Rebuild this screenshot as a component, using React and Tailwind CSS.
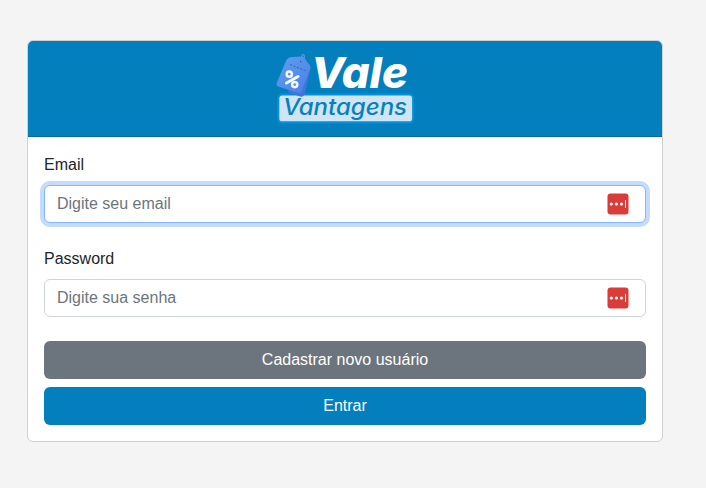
function Logo() {
  return (
    <svg width="144" height="80" viewBox="273 50 144 80" role="img" aria-label="Vale Vantagens" className="overflow-visible">
      <defs>
        <linearGradient id="tag" x1="0" y1="0" x2="1" y2="1">
          <stop offset="0" stopColor="#5f9ff0" />
          <stop offset="1" stopColor="#4a80e6" />
        </linearGradient>
      </defs>
      <rect x="278.200" y="94.400" width="135" height="28" rx="4" fill="#cfe5f3" stroke="#0092dc" strokeWidth="2.200" />
      <path d="M301 59l8.500 5q1.600 1.500 1.300 4l-5.800 25q-1 4.300-5 3.600l-12.500-4.600z" fill="#3f74da" />
      <path
        d="M289.800 57.200l11.500-.7q2 0 3 1.500l5.500 7.500q1 1.500.300 3.500l-8.300 21.500q-1.300 3-4.500 2l-18.500-5.800q-3-1-2-4l9.300-22q1-2.500 3.700-3.500z"
        fill="url(#tag)"
      />
      <path d="M290 64.500l15.500 6.200" stroke="#3260b5" strokeWidth="1" strokeDasharray="2.200 1.500" fill="none" />
      <circle cx="301.500" cy="61" r="1.500" fill="#3364bd" />
      <path d="M301.500 61c-.6-4 .9-7.300 2.200-6.300s.2 4.300-1.200 6.500" fill="none" stroke="#5a92ea" strokeWidth="1.300" strokeLinecap="round" />
      <g fill="none" stroke="#f4f7ff" strokeLinecap="round">
        <path d="M298 76.500l-11.500 6.500" strokeWidth="3" />
        <circle cx="289.300" cy="74.200" r="2.600" strokeWidth="2.500" />
        <circle cx="294.700" cy="84.600" r="2.600" strokeWidth="2.500" />
      </g>
      <text x="311" y="88" textLength="97" lengthAdjust="spacingAndGlyphs" fill="#fff" className="font-['Inter',sans-serif] text-[43px] font-extrabold italic [font-feature-settings:'cv11']">
        Vale
      </text>
      <text x="283" y="114.700" textLength="124" lengthAdjust="spacingAndGlyphs" fill="#0780c0" className="font-['Inter',sans-serif] text-[22.5px] font-medium italic [font-feature-settings:'cv11']">
        Vantagens
      </text>
    </svg>
  );
}

function PasswordManagerIcon() {
  return (
    <svg width="22" height="22" viewBox="0 0 22 22" className="shrink-0" aria-hidden="true">
      <rect x=".5" y=".5" width="21" height="21" rx="3" fill="#d93c39" />
      <circle cx="4.300" cy="11" r="1.600" fill="#fff" />
      <circle cx="9.400" cy="11" r="1.600" fill="#fff" />
      <circle cx="14.500" cy="11" r="1.600" fill="#fff" />
      <rect x="18" y="7" width="1" height="8" fill="#fff" />
    </svg>
  );
}

function Field({ id, label, type, placeholder, focused }) {
  return (
    <div className="mb-6">
      <label htmlFor={id} className="mb-2 block">{label}</label>
      <div
        className={
          "flex h-[38px] items-center rounded-md border bg-white pl-3 pr-4 " +
          (focused ? "border-[#86b7fe] ring-4 ring-[#c2dbff]" : "border-[#ced4da]")
        }
      >
        <input
          id={id}
          type={type}
          placeholder={placeholder}
          className="h-6 min-w-0 flex-1 bg-transparent outline-none placeholder:text-[#6c757d]"
        />
        <PasswordManagerIcon />
      </div>
    </div>
  );
}

export default function App() {
  return (
    <main className="h-screen overflow-hidden bg-[#f4f4f4] pl-[27px] pt-10 font-['Liberation_Sans',Arial,sans-serif] text-base leading-6 text-[#212529]">
      <section className="w-[636px] overflow-hidden rounded-md border border-[#d0d0d0] bg-white">
        <header className="flex h-24 justify-center border-b border-[#036a9f] bg-[#027fbc] pt-[9px]">
          <Logo />
        </header>
        <form className="p-4">
          <Field id="email" label="Email" type="email" placeholder="Digite seu email" focused />
          <Field id="password" label="Password" type="password" placeholder="Digite sua senha" />
          <div className="flex flex-col gap-2">
            <button type="button" className="h-[38px] rounded-md bg-[#6c757d] text-white">Cadastrar novo usuário</button>
            <button type="button" className="h-[38px] rounded-md bg-[#027fbc] text-white">Entrar</button>
          </div>
        </form>
      </section>
    </main>
  );
}
